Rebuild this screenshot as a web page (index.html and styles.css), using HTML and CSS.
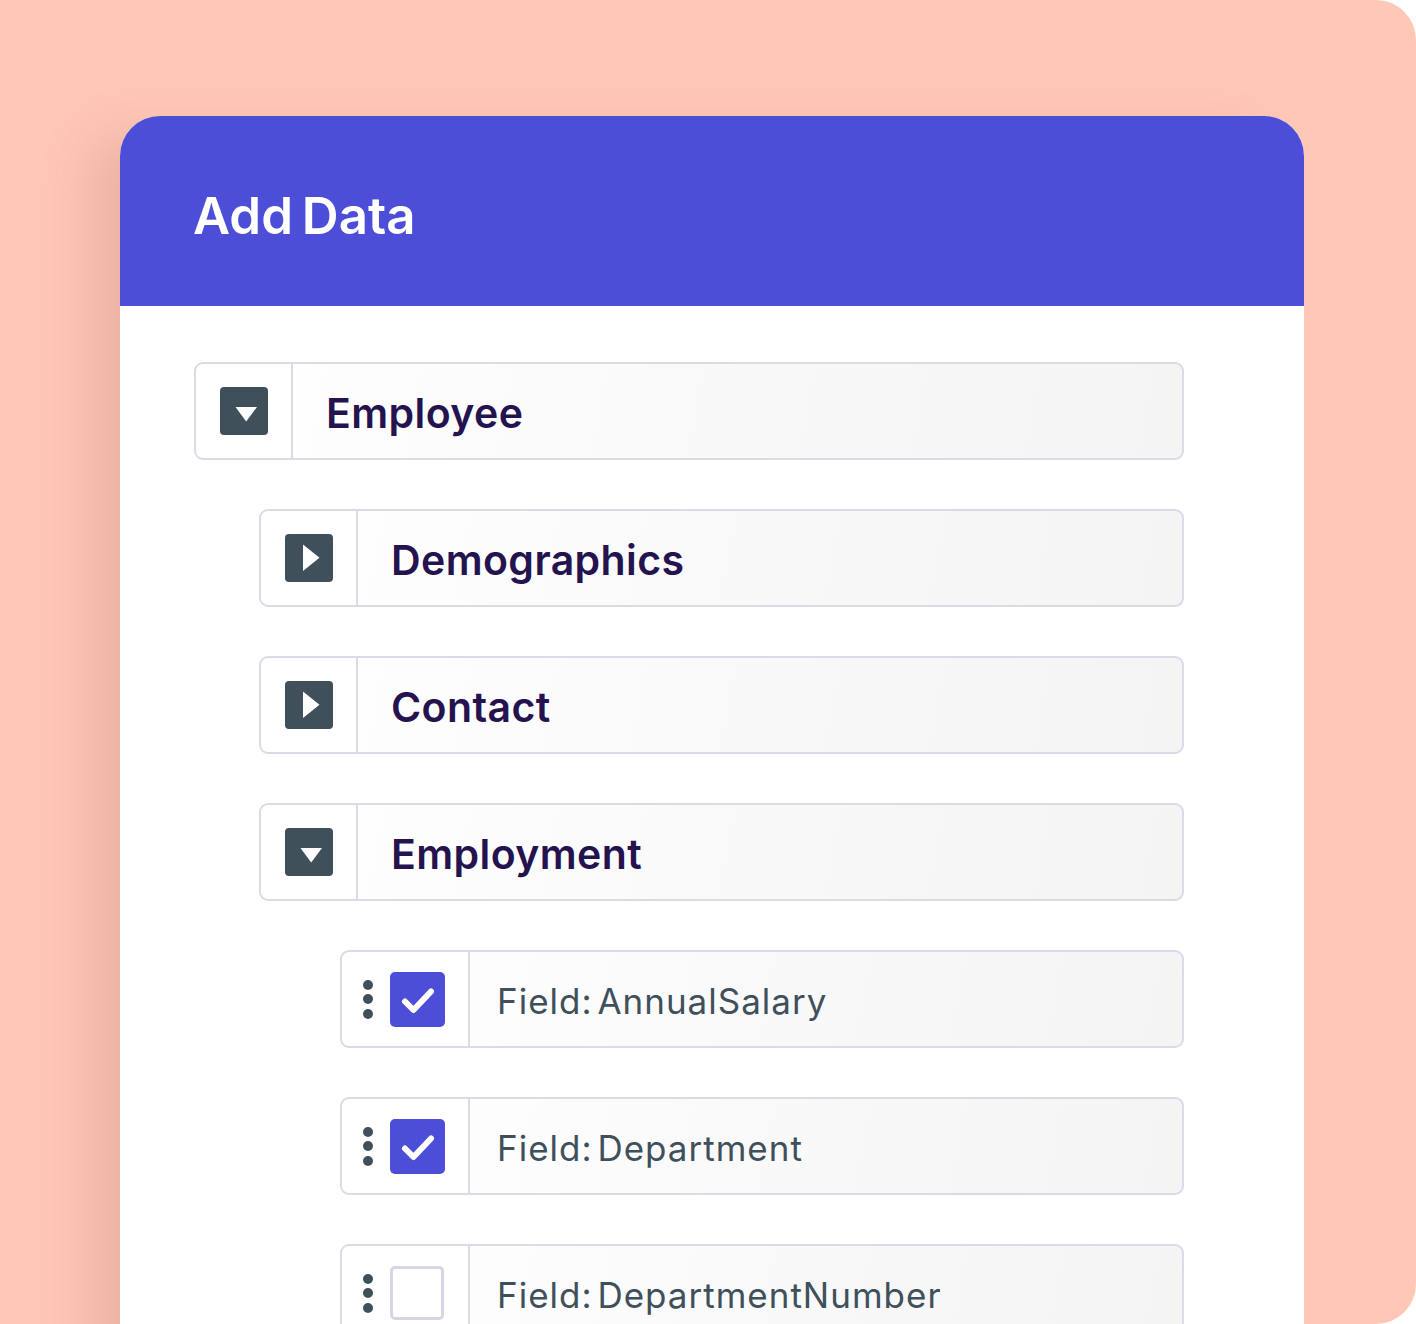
FILE: index.html
```html
<!DOCTYPE html>
<html>
<head>
<meta charset="utf-8">
<link rel="stylesheet" href="styles.css">
</head>
<body>
<div class="stage">
  <div class="card">
    <div class="card-head"><h1 class="title">Add Data</h1></div>
    <div class="card-body">
      <div class="row lvl1">
        <div class="cell-icon"><span class="toggle"><svg viewBox="0 0 48 48" width="48" height="48"><polygon points="15.5,20 37,20 26.2,34.5" fill="#fff"/></svg></span></div>
        <div class="label cat">Employee</div>
      </div>
      <div class="row lvl2">
        <div class="cell-icon"><span class="toggle"><svg viewBox="0 0 48 48" width="48" height="48"><polygon points="18,10.5 18,37 34.5,23.8" fill="#fff"/></svg></span></div>
        <div class="label cat">Demographics</div>
      </div>
      <div class="row lvl2">
        <div class="cell-icon"><span class="toggle"><svg viewBox="0 0 48 48" width="48" height="48"><polygon points="18,10.5 18,37 34.5,23.8" fill="#fff"/></svg></span></div>
        <div class="label cat">Contact</div>
      </div>
      <div class="row lvl2">
        <div class="cell-icon"><span class="toggle"><svg viewBox="0 0 48 48" width="48" height="48"><polygon points="15.5,20 37,20 26.2,34.5" fill="#fff"/></svg></span></div>
        <div class="label cat">Employment</div>
      </div>
      <div class="row lvl3">
        <div class="cell-field">
          <span class="grip"><i></i><i></i><i></i></span>
          <span class="check on"><svg viewBox="0 0 55 55" width="55" height="55"><polyline points="15,29.5 23.5,38 41,19.5" fill="none" stroke="#fff" stroke-width="6" stroke-linecap="round" stroke-linejoin="round"/></svg></span>
        </div>
        <div class="label field">Field: AnnualSalary</div>
      </div>
      <div class="row lvl3">
        <div class="cell-field">
          <span class="grip"><i></i><i></i><i></i></span>
          <span class="check on"><svg viewBox="0 0 55 55" width="55" height="55"><polyline points="15,29.5 23.5,38 41,19.5" fill="none" stroke="#fff" stroke-width="6" stroke-linecap="round" stroke-linejoin="round"/></svg></span>
        </div>
        <div class="label field">Field: Department</div>
      </div>
      <div class="row lvl3">
        <div class="cell-field">
          <span class="grip"><i></i><i></i><i></i></span>
          <span class="check off"></span>
        </div>
        <div class="label field">Field: DepartmentNumber</div>
      </div>
    </div>
  </div>
</div>
</body>
</html>
```

FILE: styles.css
```css
html, body {
  margin: 0;
  padding: 0;
  background: #ffffff;
}
.stage {
  width: 1416px;
  height: 1324px;
  background: #ffc7b6;
  border-radius: 0 40px 40px 0;
  overflow: hidden;
  padding: 116px 0 0 120px;
  box-sizing: border-box;
}
.card {
  width: 1184px;
  height: 1400px;
  background: #ffffff;
  border-radius: 40px 40px 0 0;
  box-shadow: -40px 10px 50px -10px rgba(170, 110, 95, 0.22);
  overflow: hidden;
}
.card-head {
  height: 190px;
  background: #4d4ed8;
  display: flex;
  align-items: center;
  padding-left: 73px;
  box-sizing: border-box;
}
.title {
  margin: 8px 0 0 0;
  font-family: Inter, "Liberation Sans", sans-serif;
  font-weight: 600;
  font-size: 51px;
  letter-spacing: 0px;
  word-spacing: -4px;
  color: #ffffff;
}
.card-body {
  padding: 56px 120px 0 74px;
  display: flex;
  flex-direction: column;
  gap: 49px;
}
.row {
  height: 98px;
  box-sizing: border-box;
  border: 2px solid #dcd9e9;
  border-radius: 9px;
  background: linear-gradient(100deg, #ffffff 0%, #f9f9fa 50%, #f4f4f5 100%);
  display: flex;
  align-items: stretch;
}
.lvl2 { margin-left: 65px; }
.lvl3 { margin-left: 146px; }
.cell-icon {
  width: 95px;
  border-right: 2px solid #dcd9e9;
  display: flex;
  align-items: center;
  justify-content: center;
  background: #ffffff;
  border-radius: 9px 0 0 9px;
}
.toggle {
  width: 48px;
  height: 48px;
  background: #3f505b;
  border-radius: 4px;
  display: block;
}
.toggle svg { display: block; }
.cell-field {
  width: 128px;
  border-right: 2px solid #dcd9e9;
  display: flex;
  align-items: center;
  padding-left: 21px;
  box-sizing: border-box;
  gap: 17px;
  background: #ffffff;
  border-radius: 9px 0 0 9px;
}
.grip {
  display: flex;
  flex-direction: column;
  gap: 4.5px;
}
.grip i {
  width: 10px;
  height: 10px;
  border-radius: 50%;
  background: #3f505b;
  display: block;
}
.check {
  width: 55px;
  height: 55px;
  border-radius: 5px;
  box-sizing: border-box;
  display: block;
}
.check svg { display: block; }
.check.on { background: #4d4ed8; }
.check.off {
  width: 54px;
  height: 54px;
  border: 3px solid #d9d5e7;
  background: #ffffff;
}
.label {
  display: flex;
  align-items: center;
  font-family: Inter, "Liberation Sans", sans-serif;
  padding-top: 3px;
}
.cat {
  padding-left: 33px;
  font-size: 41px;
  font-weight: 600;
  letter-spacing: 0.4px;
  color: #24134f;
}
.field {
  padding-left: 27px;
  font-size: 35px;
  font-weight: 400;
  letter-spacing: 1px;
  word-spacing: -6px;
  color: #3f505b;
}
```
